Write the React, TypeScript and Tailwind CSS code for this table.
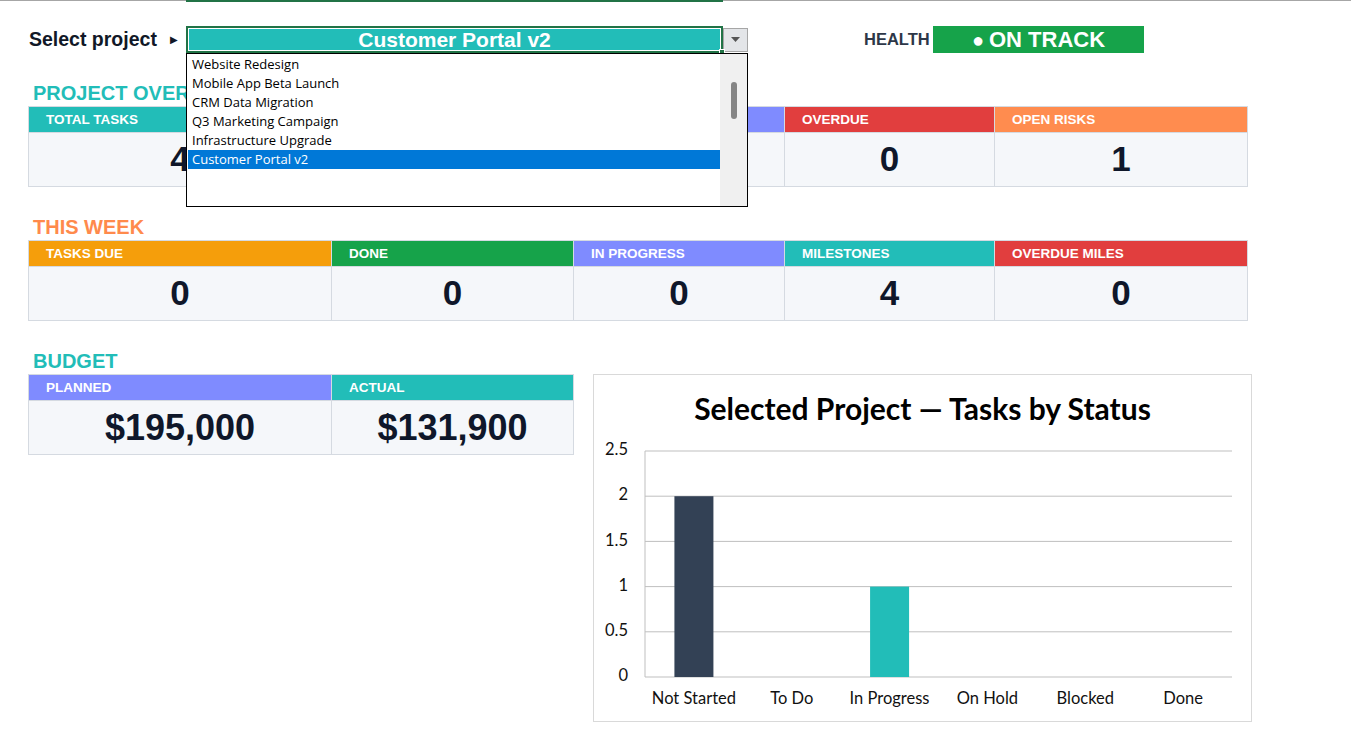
import React from 'react';

type Card = { label: string; value: string; color: string };

const TEAL = 'bg-[#22bdb8]';

const overview: Card[] = [
  { label: 'TOTAL TASKS', value: '4', color: TEAL },
  { label: 'DONE', value: '0', color: 'bg-[#16a34a]' },
  { label: 'IN PROGRESS', value: '1', color: 'bg-[#7f8bff]' },
  { label: 'OVERDUE', value: '0', color: 'bg-[#e13e3e]' },
  { label: 'OPEN RISKS', value: '1', color: 'bg-[#ff8c4f]' },
];

const thisWeek: Card[] = [
  { label: 'TASKS DUE', value: '0', color: 'bg-[#f59e0b]' },
  { label: 'DONE', value: '0', color: 'bg-[#16a34a]' },
  { label: 'IN PROGRESS', value: '0', color: 'bg-[#7f8bff]' },
  { label: 'MILESTONES', value: '4', color: TEAL },
  { label: 'OVERDUE MILES', value: '0', color: 'bg-[#e13e3e]' },
];

const budget: Card[] = [
  { label: 'PLANNED', value: '$195,000', color: 'bg-[#7f8bff]' },
  { label: 'ACTUAL', value: '$131,900', color: TEAL },
];

const projects = [
  'Website Redesign',
  'Mobile App Beta Launch',
  'CRM Data Migration',
  'Q3 Marketing Campaign',
  'Infrastructure Upgrade',
  'Customer Portal v2',
];

const statuses = [
  { name: 'Not Started', value: 2, color: '#334155' },
  { name: 'To Do', value: 0, color: '#334155' },
  { name: 'In Progress', value: 1, color: '#22bdb8' },
  { name: 'On Hold', value: 0, color: '#334155' },
  { name: 'Blocked', value: 0, color: '#334155' },
  { name: 'Done', value: 0, color: '#334155' },
];

const KpiTable: React.FC<{ cards: Card[]; cols: string; big?: boolean }> = ({ cards, cols, big }) => (
  <div className={`grid ${cols} ml-[28px] border-l border-t border-[#d5dae1] w-fit`}>
    {cards.map((c) => (
      <div
        key={c.label + 'h'}
        className={`${c.color} h-[26px] flex items-center pt-[2px] pl-[17px] border-r border-b border-[#d5dae1] text-white font-bold text-[13.5px]`}
      >
        {c.label}
      </div>
    ))}
    {cards.map((c) => (
      <div
        key={c.label + 'v'}
        className={`h-[54px] bg-[#f5f7fa] flex items-center justify-center border-r border-b border-[#d5dae1] text-[#0f172a] font-bold ${
          big ? 'text-[36px]' : 'text-[35px]'
        }`}
      >
        {c.value}
      </div>
    ))}
  </div>
);

const SectionLabel: React.FC<{ text: string; color: string }> = ({ text, color }) => (
  <div className={`h-[26px] mt-[27px] pl-[33px] flex items-center font-bold text-[20px] ${color}`}>{text}</div>
);

const Chart: React.FC = () => {
  const x0 = 51;
  const x1 = 638;
  const yTop = 18;
  const yZero = 244;
  const step = (x1 - x0) / statuses.length;
  const scale = (yZero - yTop) / 2.5;
  const ticks = [2.5, 2, 1.5, 1, 0.5, 0];

  return (
    <div className="ml-[20px] mt-[53px] w-[659px] h-[348px] border border-[#d9d9d9] bg-white flex flex-col font-['Lato',sans-serif]">
      <div className="h-[58px] pt-[8px] flex items-center justify-center text-[30px] font-bold text-black">
        Selected Project — Tasks by Status
      </div>
      <svg width="657" height="288" className="block">
        {ticks.map((t) => {
          const y = yZero - t * scale;
          return (
            <g key={t}>
              <line x1={x0} x2={x1} y1={y} y2={y} stroke="#bfbfbf" strokeWidth="1" />
              <text x={34} y={y} textAnchor="end" dominantBaseline="middle" fontSize="16.5" fill="#111">
                {t}
              </text>
            </g>
          );
        })}
        <line x1={x0} x2={x0} y1={yTop} y2={yZero} stroke="#bfbfbf" strokeWidth="1" />
        {statuses.map((s, i) => {
          const cx = x0 + step * (i + 0.5);
          const h = s.value * scale;
          return (
            <g key={s.name}>
              {s.value > 0 && <rect x={cx - 19.5} y={yZero - h} width={39} height={h} fill={s.color} />}
              <text x={cx} y={267} textAnchor="middle" dominantBaseline="middle" fontSize="16.5" fill="#111">
                {s.name}
              </text>
            </g>
          );
        })}
      </svg>
    </div>
  );
};

export default function App() {
  return (
    <div className="relative w-[1351px] h-[739px] bg-white overflow-hidden font-['Liberation_Sans',Arial,sans-serif]">
      {/* sheet top edge */}
      <div className="flex items-start">
        <div className="w-[186px] h-px bg-[#a6a6a6]" />
        <div className="w-[537px] h-[2px] bg-[#217346]" />
        <div className="flex-1 h-px bg-[#a6a6a6]" />
      </div>

      {/* project selector + health */}
      <div className="mt-[24px] flex items-center h-[27px]">
        <div className="w-[186px] pl-[29px] pr-[8px] flex items-center justify-between">
          <span className="font-bold text-[19.5px] text-[#111827]">Select project</span>
          <span className="text-[10px] text-[#111827]">▶</span>
        </div>
        <div className="relative w-[537px] h-[27px] border-2 border-[#217346] bg-[#22bdb8] flex items-center justify-center">
          <div className="absolute inset-0 border border-white" />
          <span className="text-white font-bold text-[21px]">Customer Portal v2</span>
          <div className="absolute -right-[4px] -bottom-[4px] w-[6px] h-[6px] bg-[#217346] border border-white" />
        </div>
        <div className="w-[25px] h-[24px] bg-[#e3e5e8] border border-[#a6a6a6] flex items-center justify-center">
          <svg width="9" height="5" viewBox="0 0 9 5">
            <path d="M0 0h9L4.5 5z" fill="#555" />
          </svg>
        </div>
        <div className="w-[116px]" />
        <div className="w-[69px] font-bold text-[16.5px] text-[#2d3748]">HEALTH</div>
        <div className="w-[211px] h-[27px] bg-[#16a34a] flex items-center justify-center gap-[5px] text-white font-bold text-[22px]">
          <span className="text-[20px] leading-none">●</span>
          <span>ON TRACK</span>
        </div>
      </div>

      {/* dropdown list */}
      <div className="absolute left-[186px] top-[53px] w-[562px] h-[154px] border border-black bg-white flex z-10">
        <div className="flex-1 pt-[1px] pl-[1px] font-['Open_Sans',sans-serif] text-[13px] text-black">
          {projects.map((p) => (
            <div
              key={p}
              className={`h-[19px] flex items-center pl-[4px] ${
                p === 'Customer Portal v2' ? 'bg-[#0078d7] text-white' : ''
              }`}
            >
              {p}
            </div>
          ))}
        </div>
        <div className="w-[27px] bg-[#f0f0f0] flex justify-center pt-[28px]">
          <div className="w-[6px] h-[37px] rounded-full bg-[#858585]" />
        </div>
      </div>

      <SectionLabel text="PROJECT OVERVIEW" color="text-[#22bdb8]" />
      <KpiTable cards={overview} cols="grid-cols-[303px_242px_211px_210px_253px]" />

      <SectionLabel text="THIS WEEK" color="text-[#ff8a4c]" />
      <KpiTable cards={thisWeek} cols="grid-cols-[303px_242px_211px_210px_253px]" />

      <div className="flex items-start">
        <div className="w-[573px]">
          <SectionLabel text="BUDGET" color="text-[#22bdb8]" />
          <KpiTable cards={budget} cols="grid-cols-[303px_242px]" big />
        </div>
        <Chart />
      </div>
    </div>
  );
}
